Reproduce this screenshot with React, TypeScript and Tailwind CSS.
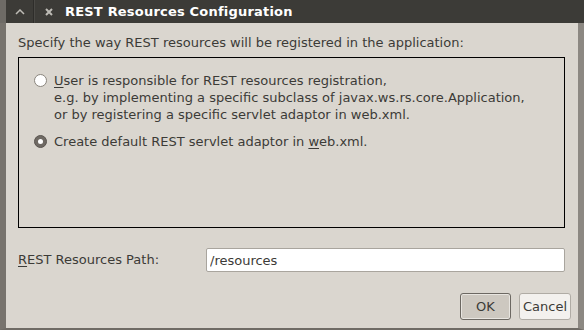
import { useState } from "react";

const Radio = ({ checked }: { checked: boolean }) => (
  <span
    className={
      "mt-[2px] flex h-[13px] w-[13px] shrink-0 items-center justify-center rounded-full border " +
      (checked ? "border-[#5a5550] bg-[#6f6a64]" : "border-[#8a857d] bg-white")
    }
  >
    {checked && <span className="h-[5px] w-[5px] rounded-full bg-white" />}
  </span>
);

export default function App() {
  const [path, setPath] = useState("/resources");

  return (
    <div
      className="flex h-[330px] w-[584px] flex-col overflow-hidden bg-[#dad6cf] text-[13px] text-[#3c3b37]"
      style={{ fontFamily: '"DejaVu Sans", "Noto Sans", sans-serif' }}
    >
      {/* title bar */}
      <div className="flex h-[23px] shrink-0 items-center border-l-[6px] border-l-[#6e6b66] bg-[#3c3b37] text-white">
        <div className="flex h-full w-[28px] items-center justify-center border-r border-[#2e2d2a] text-[#bdbbb5]">
          <svg width="10" height="6" viewBox="0 0 10 6">
            <path d="M1 5 L5 1 L9 5" fill="none" stroke="currentColor" strokeWidth="1.5" />
          </svg>
        </div>
        <div className="flex h-full w-[28px] items-center justify-center border-l border-[#4a4945] text-[#bdbbb5]">
          <svg width="8" height="8" viewBox="0 0 8 8">
            <path d="M1 1 L7 7 M7 1 L1 7" fill="none" stroke="currentColor" strokeWidth="2" />
          </svg>
        </div>
        <span className="ml-[3px] text-[13px] font-bold tracking-[0.2px]">REST Resources Configuration</span>
      </div>

      <div className="flex flex-1 border-l-[6px] border-r-[6px] border-b-[2px] border-l-[#77736d] border-r-[#8c8882] border-b-[#6f6b65]">
        <div className="flex flex-1 flex-col pl-[12px] pr-[13px] pt-[10px]">
          <p className="leading-[20px]">Specify the way REST resources will be registered in the application:</p>

          <div className="mt-[4px] h-[171px] border border-black px-[15px] pt-[14px]">
            <label className="flex items-start gap-[7px]">
              <Radio checked={false} />
              <span className="leading-[17px]">
                <span className="underline underline-offset-2">U</span>ser is responsible for REST resources registration,
                <br />
                e.g. by implementing a specific subclass of javax.ws.rs.core.Application,
                <br />
                or by registering a specific servlet adaptor in web.xml.
              </span>
            </label>
            <label className="mt-[10px] flex items-start gap-[7px]">
              <Radio checked={true} />
              <span className="leading-[17px]">
                Create default REST servlet adaptor in <span className="underline underline-offset-2">w</span>eb.xml.
              </span>
            </label>
          </div>

          <div className="mt-[20px] flex items-center">
            <span className="w-[188px]">
              <span className="underline underline-offset-2">R</span>EST Resources Path:
            </span>
            <input
              value={path}
              onChange={(e) => setPath(e.target.value)}
              className="h-[24px] flex-1 rounded-[2px] border border-[#a9a59e] bg-white px-[3px] text-[13px] text-[#3c3b37] outline-none"
            />
          </div>

          <div className="mr-[-6px] mt-[21px] flex justify-end gap-[8px]">
            <button className="h-[27px] w-[51px] rounded-[3px] border border-[#6c6862] bg-[#cdc8c0] shadow-[inset_0_0_0_1px_#e8e5e0] text-[#3c3b37]">
              OK
            </button>
            <button className="h-[27px] w-[52px] rounded-[3px] border border-[#b0aca5] bg-[#f3f1ee] text-[#3c3b37]">
              Cancel
            </button>
          </div>
        </div>
      </div>
    </div>
  );
}
